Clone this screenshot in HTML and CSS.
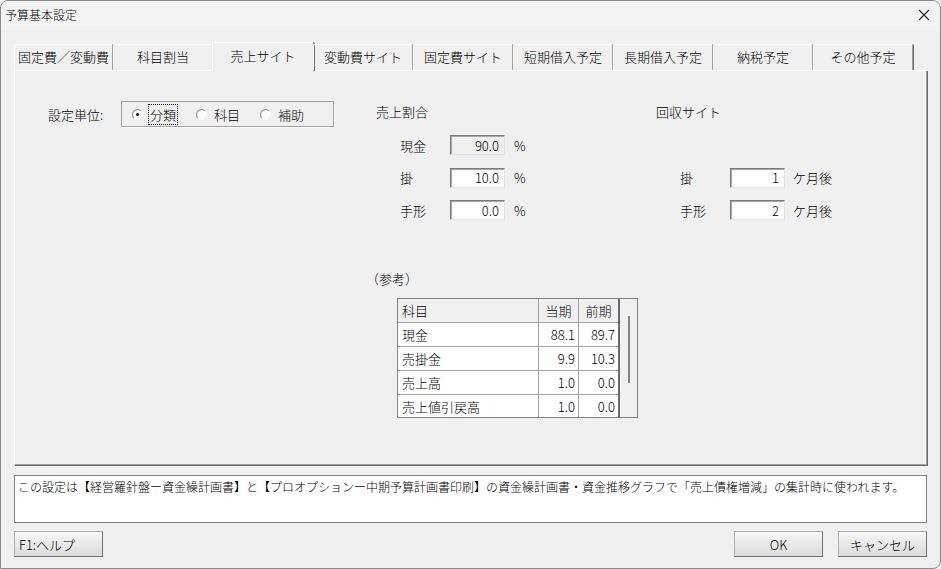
FILE: index.html
```html
<!DOCTYPE html>
<html lang="ja">
<head>
    <meta charset="UTF-8">
    <title>予算基本設定</title>
    <link rel="stylesheet" href="styles.css">
</head>
<body>
<div id="dialog">
    <div id="titlebar">
        <span class="title">予算基本設定</span>
        <svg class="close" width="12" height="12" viewBox="0 0 12 12">
            <path d="M1 1 L11 11 M11 1 L1 11" stroke="#222" stroke-width="1.1" fill="none"/>
        </svg>
    </div>

    <div id="tabs">
        <div class="tab">固定費／変動費</div>
        <div class="tab">科目割当</div>
        <div class="tab selected">売上サイト</div>
        <div class="tab">変動費サイト</div>
        <div class="tab">固定費サイト</div>
        <div class="tab">短期借入予定</div>
        <div class="tab">長期借入予定</div>
        <div class="tab">納税予定</div>
        <div class="tab">その他予定</div>
    </div>

    <div id="panel">
        <div class="col-unit">
            <span class="unit-label">設定単位:</span>
            <div class="group">
                <div class="option"><span class="radio checked"></span><span class="opt-text focus">分類</span></div>
                <div class="option"><span class="radio"></span><span class="opt-text">科目</span></div>
                <div class="option"><span class="radio"></span><span class="opt-text">補助</span></div>
            </div>
        </div>

        <div class="col-ratio">
            <div class="heading">売上割合</div>
            <div class="fields ratio-fields">
                <span class="label">現金</span><input class="num disabled" value="90.0" readonly><span>%</span>
                <span class="label">掛</span><input class="num" value="10.0"><span>%</span>
                <span class="label">手形</span><input class="num" value="0.0"><span>%</span>
            </div>

            <div class="ref-title">（参考）</div>
            <div class="ref">
                <table>
                    <tr class="head"><td class="name">科目</td><td>当期</td><td>前期</td></tr>
                    <tr><td class="name">現金</td><td class="val">88.1</td><td class="val">89.7</td></tr>
                    <tr><td class="name">売掛金</td><td class="val">9.9</td><td class="val">10.3</td></tr>
                    <tr><td class="name">売上高</td><td class="val">1.0</td><td class="val">0.0</td></tr>
                    <tr><td class="name">売上値引戻高</td><td class="val">1.0</td><td class="val">0.0</td></tr>
                </table>
                <div class="scroll"><div class="thumb"></div></div>
            </div>
        </div>

        <div class="col-site">
            <div class="heading">回収サイト</div>
            <div class="fields site-fields">
                <span class="blank"></span><span class="blank"></span><span class="blank"></span>
                <span class="label">掛</span><input class="num" value="1"><span>ケ月後</span>
                <span class="label">手形</span><input class="num" value="2"><span>ケ月後</span>
            </div>
        </div>
    </div>

    <div id="note">この設定は【経営羅針盤ー資金繰計画書】と【プロオプションー中期予算計画書印刷】の資金繰計画書・資金推移グラフで「売上債権増減」の集計時に使われます。</div>

    <div id="buttons">
        <button class="help">F1:ヘルプ</button>
        <span class="spacer"></span>
        <button>OK</button>
        <button>キャンセル</button>
    </div>
</div>
</body>
</html>
```

FILE: styles.css
```css
body{
    margin:0;
    background:#f0f0f0;
    font-family:"MS UI Gothic","Noto Sans CJK JP",sans-serif;
    font-size:13px;
    font-weight:300;
    color:#000;
}
#dialog{
    width:941px;
    height:569px;
    box-sizing:border-box;
    border:1px solid #8a8a8a;
    border-radius:8px 8px 8px 0;
    background:#f0f0f0;
    display:flex;
    flex-direction:column;
    overflow:hidden;
}
#titlebar{
    height:30px;
    display:flex;
    align-items:center;
    justify-content:space-between;
    padding:0 10px 3px 4px;
    box-sizing:border-box;
    background:#f3f3f3;
}
.title{
    font-size:12px;
}

/* tabs */
#tabs{
    margin:11px 13px 0 13px;
    height:28px;
    display:flex;
    align-items:flex-end;
    position:relative;
    z-index:1;
}
.tab{
    width:100px;
    height:26px;
    box-sizing:border-box;
    border-top:1px solid #fff;
    border-left:1px solid #fff;
    border-right:1px solid #a0a0a0;
    box-shadow:1px 0 0 #696969;
    border-radius:2px 2px 0 0;
    display:flex;
    align-items:center;
    justify-content:center;
    padding-bottom:2px;
}
.tab:first-child{
    width:99px;
}
.tab.selected{
    height:29px;
    margin-bottom:-1px;
    width:102px;
    margin-left:-1px;
    margin-right:-1px;
    background:#f0f0f0;
    padding-bottom:4px;
}

/* panel */
#panel{
    margin:0 13px;
    height:395px;
    box-sizing:border-box;
    border-top:1px solid #fff;
    border-left:1px solid #fff;
    border-right:1px solid #a0a0a0;
    border-bottom:1px solid #a0a0a0;
    box-shadow:1px 1px 0 #696969;
    display:flex;
    padding-top:30px;
}
.col-unit{
    width:315px;
    flex-shrink:0;
    margin-left:33px;
    height:26px;
    display:flex;
    align-items:center;
}
.unit-label{
    width:73px;
}
.group{
    width:213px;
    height:26px;
    box-sizing:border-box;
    border:1px solid #a0a0a0;
    box-shadow:1px 1px 0 #fff;
    display:flex;
    align-items:center;
    padding-left:10px;
}
.option{
    width:64px;
    display:flex;
    align-items:center;
}
.radio{
    width:11px;
    height:11px;
    box-sizing:border-box;
    border-radius:50%;
    border:1px solid;
    border-color:#8a8a8a #f8f8f8 #f8f8f8 #8a8a8a;
    background:#fbfbfb;
    margin-right:5px;
    position:relative;
}
.radio.checked::after{
    content:"";
    position:absolute;
    left:3px;
    top:3px;
    width:3px;
    height:3px;
    border-radius:50%;
    background:#000;
}
.opt-text{
    padding:0 1px;
    border:1px solid transparent;
}
.opt-text.focus{
    border:1px dotted #000;
}

.heading{
    height:20px;
    line-height:20px;
    margin-top:1px;
}
.col-ratio{
    width:293px;
    flex-shrink:0;
}
.col-ratio .heading{
    margin-left:13px;
}
.fields{
    display:grid;
    grid-template-rows:20px 20px 20px;
    row-gap:12.5px;
    align-items:center;
    margin-top:13px;
}
.ratio-fields{
    grid-template-columns:50px 64px auto;
    margin-left:37px;
}
.site-fields{
    grid-template-columns:50px 63px auto;
    margin-left:24px;
}
.num{
    width:55px;
    height:20px;
    box-sizing:border-box;
    border:1px solid;
    border-color:#7a7a7a #e3e3e3 #e3e3e3 #7a7a7a;
    box-shadow:inset 1px 1px 0 #a8a8a8;
    background:#fff;
    font:inherit;
    text-align:right;
    padding:0 5px 0 0;
    outline:none;
}
.num.disabled{
    background:#f0f0f0;
}

/* reference table */
.ref-title{
    margin-top:49px;
    margin-left:3px;
    height:20px;
    line-height:20px;
}
.ref{
    margin-top:9px;
    margin-left:34px;
    width:241px;
    height:120px;
    box-sizing:border-box;
    border:1px solid #828282;
    display:flex;
    background:#fff;
}
.ref table{
    border-collapse:collapse;
    width:222px;
    font-size:13px;
}
.ref td{
    height:23px;
    padding:0 3px;
    border-right:1px solid #a0a0a0;
    border-bottom:1px solid #a0a0a0;
    text-align:right;
}
.ref tr:last-child td{
    border-bottom:none;
}
.ref td.name{
    width:133px;
    text-align:left;
    padding-left:4px;
}
.ref .head td{
    background:#f0f0f0;
    text-align:center;
}
.ref .head td.name{
    text-align:left;
}
.ref .head td:last-child,.ref td:last-child{
    border-right:2px solid #6a6a6a;
}
.scroll{
    flex:1;
    background:#f0f0f0;
    position:relative;
}
.thumb{
    position:absolute;
    left:8px;
    top:17px;
    width:2px;
    height:67px;
    background:#858585;
}

/* note */
#note{
    margin:10px 13px 0 13px;
    height:48px;
    box-sizing:border-box;
    border:1px solid #828282;
    background:#fff;
    font-size:12px;
    padding:2px 3px;
    white-space:nowrap;
    overflow:hidden;
}

/* buttons */
#buttons{
    margin:8px 13px 0 13px;
    display:flex;
    gap:15px;
}
.spacer{
    flex:1;
}
button{
    width:89px;
    height:26px;
    font:inherit;
    border:1px solid;
    border-color:#b0b0b0 #707070 #707070 #b0b0b0;
    background:linear-gradient(#f7f7f7,#dcdcdc);
    padding:0;
    color:#000;
}
button.help{
    text-align:left;
    padding-left:4px;
}
```
